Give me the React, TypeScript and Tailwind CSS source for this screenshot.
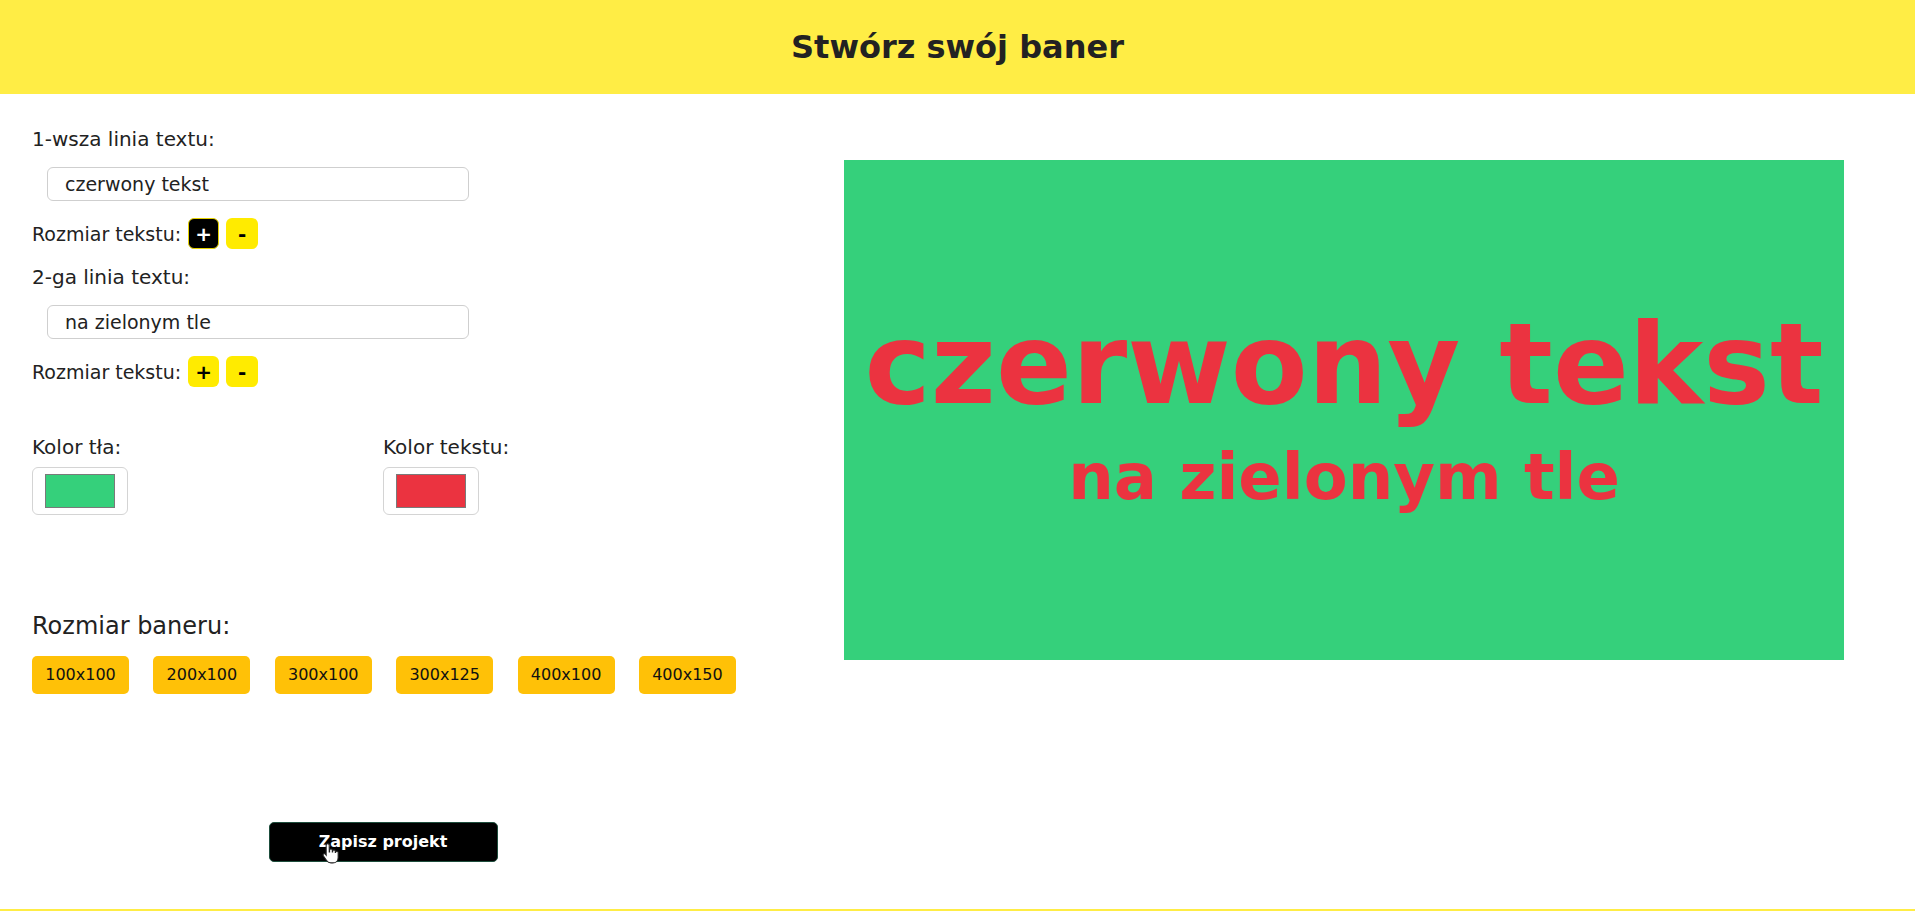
import React from "react";

const FONT = { fontFamily: '"DejaVu Sans", "Liberation Sans", sans-serif' };

function SizeRow({ active }: { active: boolean }) {
  return (
    <div className="mt-[17px] flex h-[31px] items-center">
      <span className="text-[19px] leading-[22px]">Rozmiar tekstu:</span>
      <button
        className={
          active
            ? "ml-[7px] flex h-[31px] w-[31px] items-center justify-center rounded-[6px] border border-[#e6d200] bg-black text-[20px] font-bold text-white"
            : "ml-[7px] flex h-[31px] w-[31px] items-center justify-center rounded-[6px] bg-[#ffeb00] text-[20px] font-bold text-black"
        }
      >
        +
      </button>
      <button className="ml-[7px] flex h-[31px] w-[32px] items-center justify-center rounded-[6px] bg-[#ffeb00] text-[20px] font-bold text-black">
        -
      </button>
    </div>
  );
}

function TextInput({ value }: { value: string }) {
  return (
    <div className="ml-[15px] mt-[16px] flex h-[34px] w-[422px] items-center rounded-[6px] border border-[#cfcfcf] pl-[17px] text-[19px]">
      {value}
    </div>
  );
}

function ColorBox({ color }: { color: string }) {
  return (
    <div className="mt-[8px] flex h-[48px] w-[96px] items-center justify-center rounded-[6px] border border-[#d4d4d4] bg-white">
      <div className="h-[34px] w-[70px] border border-[#7a7a7a]" style={{ backgroundColor: color }} />
    </div>
  );
}

export default function App() {
  const sizes = ["100x100", "200x100", "300x100", "300x125", "400x100", "400x150"];
  return (
    <div className="w-[1915px] bg-white text-[#222222]" style={FONT}>
      <header className="flex h-[94px] items-center justify-center bg-[#ffed45]">
        <h1 className="text-[32px] font-bold text-[#222222]">Stwórz swój baner</h1>
      </header>
      <main className="flex h-[815px]">
        <section className="w-[766px] pt-[34px]">
          <div className="px-[32px]">
            <div className="text-[20px] leading-[23px]">1-wsza linia textu:</div>
            <TextInput value="czerwony tekst" />
            <SizeRow active={true} />
            <div className="mt-[17px] text-[20px] leading-[23px]">2-ga linia textu:</div>
            <TextInput value="na zielonym tle" />
            <SizeRow active={false} />
            <div className="mt-[49px] flex">
              <div className="w-[352px]">
                <div className="text-[20px] leading-[23px]">Kolor tła:</div>
                <ColorBox color="#35d07b" />
              </div>
              <div className="w-[352px]">
                <div className="text-[20px] leading-[23px]">Kolor tekstu:</div>
                <ColorBox color="#eb3340" />
              </div>
            </div>
            <div className="mt-[97px] text-[24px] leading-[28px]">Rozmiar baneru:</div>
            <div className="mt-[16px] grid grid-cols-[repeat(6,97px)] gap-x-[24.4px]">
              {sizes.map((s) => (
                <button
                  key={s}
                  className="flex h-[38px] w-[97px] items-center justify-center rounded-[5px] bg-[#ffc107] text-[16px] text-[#111111]"
                >
                  {s}
                </button>
              ))}
            </div>
          </div>
          <div className="mt-[128px] flex justify-center">
            <div className="relative">
              <button className="flex h-[40px] w-[229px] items-center justify-center rounded-[5px] border border-[#1d4d3c] bg-black text-[16px] font-bold text-white">
                Zapisz projekt
              </button>
              <svg
                className="absolute left-[53px] top-[20px]"
                width="18"
                height="22"
                viewBox="0 0 16 20"
              >
                <path
                  d="M5 1.5c.8 0 1.4.6 1.4 1.4V9h.3V7.6c0-.7.6-1.2 1.3-1.2s1.2.5 1.2 1.2v1.5h.3V8.4c0-.7.6-1.2 1.2-1.2.7 0 1.2.5 1.2 1.2v1h.3c0-.7.5-1.1 1.1-1.1.7 0 1.2.5 1.2 1.2v4.5c0 2.8-2 5-4.8 5H8c-1.8 0-3-.8-4-2.2L1 12.5c-.4-.6-.3-1.3.3-1.7.5-.3 1.2-.2 1.6.3l.7.9V2.9c0-.8.6-1.4 1.4-1.4z"
                  fill="#ffffff"
                  stroke="#222222"
                  strokeWidth="1"
                />
              </svg>
            </div>
          </div>
        </section>
        <section className="flex-1 pl-[78px] pt-[66px]">
          <div className="flex h-[500px] w-[1000px] flex-col items-center justify-center bg-[#35d07b] font-bold text-[#eb3340]">
            <div className="text-[112px] leading-[120px]">czerwony tekst</div>
            <div className="mt-[13px] text-[64px] leading-[80px]">na zielonym tle</div>
          </div>
        </section>
      </main>
      <footer className="h-[60px] bg-[#ffed45]" />
    </div>
  );
}
